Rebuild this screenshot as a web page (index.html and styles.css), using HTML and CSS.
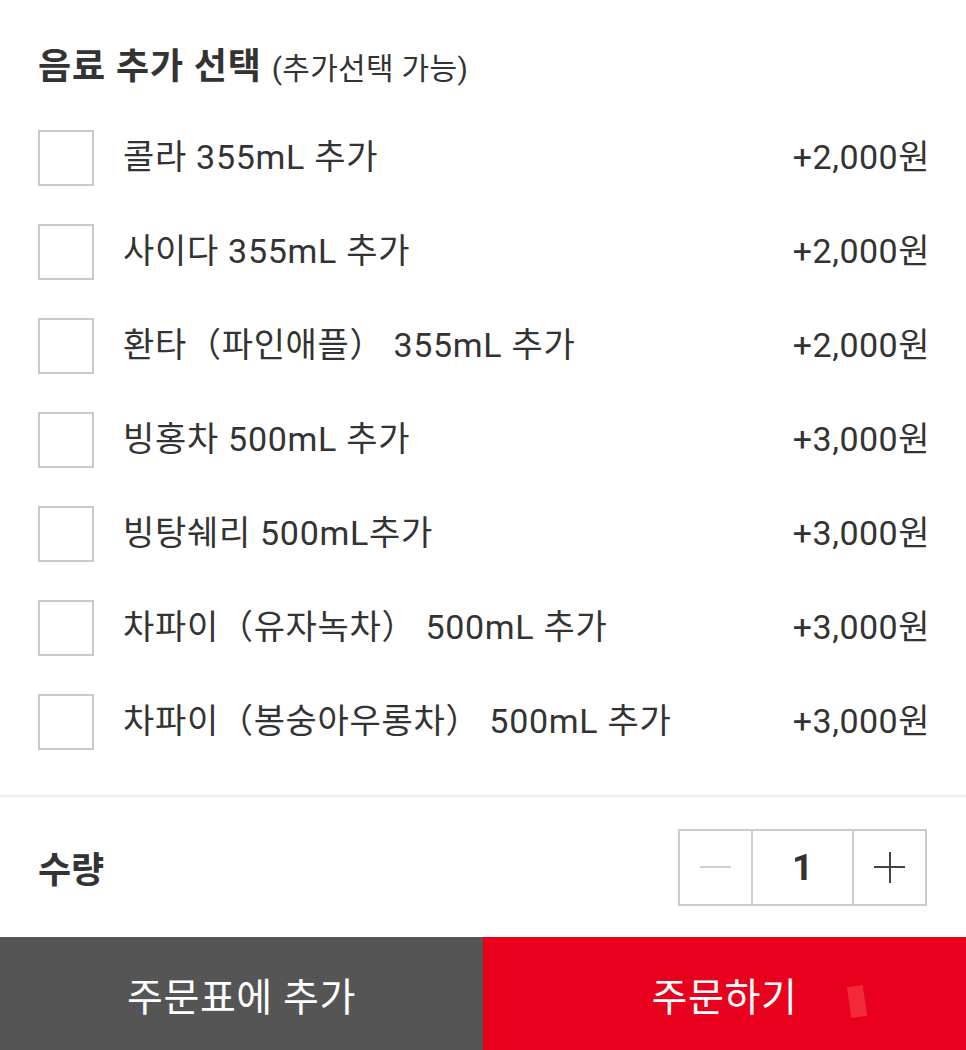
FILE: index.html
```html
<!DOCTYPE html>
<html lang="ko">
<head>
<meta charset="utf-8">
<link rel="stylesheet" href="styles.css">
</head>
<body>
<div class="page">
  <section class="options">
    <h2 class="title">음료 추가 선택 <span class="sub">(추가선택 가능)</span></h2>
    <ul class="list">
      <li class="row"><span class="box"></span><span class="name">콜라 355mL 추가</span><span class="price">+2,000원</span></li>
      <li class="row"><span class="box"></span><span class="name">사이다 355mL 추가</span><span class="price">+2,000원</span></li>
      <li class="row"><span class="box"></span><span class="name">환타（파인애플） 355mL 추가</span><span class="price">+2,000원</span></li>
      <li class="row"><span class="box"></span><span class="name">빙홍차 500mL 추가</span><span class="price">+3,000원</span></li>
      <li class="row"><span class="box"></span><span class="name">빙탕쉐리 500mL추가</span><span class="price">+3,000원</span></li>
      <li class="row"><span class="box"></span><span class="name">차파이（유자녹차） 500mL 추가</span><span class="price">+3,000원</span></li>
      <li class="row"><span class="box"></span><span class="name">차파이（봉숭아우롱차） 500mL 추가</span><span class="price">+3,000원</span></li>
    </ul>
  </section>
  <section class="qty">
    <span class="qty-label">수량</span>
    <div class="stepper">
      <span class="step minus"><span class="bar-h"></span></span>
      <span class="step num">1</span>
      <span class="step plus"><span class="bar-h"></span><span class="bar-v"></span></span>
    </div>
  </section>
  <div class="actions">
    <button class="btn cart">주문표에 추가</button>
    <button class="btn order">주문하기<span class="mark"></span></button>
  </div>
</div>
</body>
</html>
```
FILE: styles.css
```css
* { box-sizing: border-box; }
html, body { margin: 0; padding: 0; background: #fff; }
body {
  font-family: Roboto, "Noto Sans CJK KR", sans-serif;
  color: #333;
  width: 966px;
  height: 1050px;
  overflow: hidden;
}
.page { display: flex; flex-direction: column; height: 1050px; }
.options {
  padding: 47px 36px 26px 38px;
  border-bottom: 2px solid #eeeeee;
}
.title {
  margin: 0 0 24px 0;
  height: 40px;
  line-height: 40px;
  font-size: 36px;
  letter-spacing: 0.9px;
  font-weight: 700;
  color: #333;
}
.title .sub {
  font-size: 30px;
  letter-spacing: 0.3px;
  font-weight: 400;
}
.list { list-style: none; margin: 0; padding: 0; }
.row {
  height: 94px;
  display: flex;
  align-items: center;
}
.box {
  width: 56px;
  height: 56px;
  border: 2px solid #c9c9c9;
  flex: none;
}
.name {
  margin-left: 29px;
  font-size: 34px;
  letter-spacing: 0.7px;
  flex: 1;
  line-height: 40px;
  margin-top: -3px;
}
.price {
  font-size: 34px;
  letter-spacing: 0.5px;
  line-height: 40px;
  margin-top: -3px;
}
.qty {
  height: 140px;
  display: flex;
  align-items: center;
  justify-content: space-between;
  padding: 0 39px 0 38px;
}
.qty-label {
  font-size: 36px;
  font-weight: 700;
}
.stepper {
  display: flex;
  height: 77px;
  border: 2px solid #cccccc;
}
.step {
  position: relative;
  display: flex;
  align-items: center;
  justify-content: center;
  width: 71px;
}
.num {
  width: 103px;
  border-left: 2px solid #cccccc;
  border-right: 2px solid #cccccc;
  font-size: 37px;
  font-weight: 700;
  color: #333;
}
.bar-h, .bar-v { position: absolute; background: #444; }
.bar-h { width: 31px; height: 2px; }
.bar-v { width: 2px; height: 31px; }
.minus .bar-h { background: #d0d0d0; }
.actions {
  display: flex;
  height: 113px;
  margin-top: auto;
}
.btn {
  border: 0;
  margin: 0;
  padding: 0;
  font-family: Roboto, "Noto Sans CJK KR", sans-serif;
  font-size: 39px;
  letter-spacing: 0.6px;
  color: #fff;
  height: 113px;
}
.cart { width: 483px; background: #555555; }
.order { flex: 1; background: #e8001d; position: relative; }
.mark {
  position: absolute;
  left: 366px;
  top: 49px;
  width: 16px;
  height: 31px;
  background: #f23440;
  transform: rotate(-8deg);
  opacity: 0.8;
}
```
